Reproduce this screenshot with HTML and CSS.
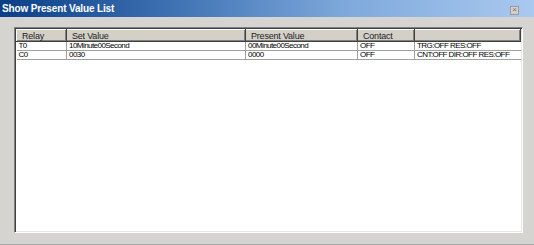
FILE: index.html
```html
<html>
  <head>
    <title>Show Present Value List</title>
    <link rel="stylesheet" href="styles.css">
  </head>
  <body>
    <div class="window">
      <div class="titlebar">
        <span class="title">Show Present Value List</span>
        <span class="close">&times;</span>
      </div>
      <div class="client">
        <div class="listbox">
          <table class="grid">
            <colgroup>
              <col class="c-relay">
              <col class="c-set">
              <col class="c-present">
              <col class="c-contact">
              <col class="c-extra">
            </colgroup>
            <thead>
              <tr>
                <th>Relay</th>
                <th>Set Value</th>
                <th>Present Value</th>
                <th>Contact</th>
                <th></th>
              </tr>
            </thead>
            <tbody>
              <tr>
                <td>T0</td>
                <td>10Minute00Second</td>
                <td>00Minute00Second</td>
                <td>OFF</td>
                <td>TRG:OFF RES:OFF</td>
              </tr>
              <tr>
                <td>C0</td>
                <td>0030</td>
                <td>0000</td>
                <td>OFF</td>
                <td>CNT:OFF DIR:OFF RES:OFF</td>
              </tr>
            </tbody>
          </table>
        </div>
      </div>
    </div>
  </body>
</html>
```

FILE: styles.css
```css
body {
  margin: 0;
  background: #d4d0c8;
  font-family: "Liberation Sans", Arial, sans-serif;
}

.window {
  width: 534px;
  height: 245px;
  display: flex;
  flex-direction: column;
  background: #d6d4d0;
  border-bottom: 1px solid #a8a8a8;
  box-sizing: border-box;
}

.titlebar {
  height: 17px;
  display: flex;
  align-items: center;
  justify-content: space-between;
  padding: 0 15px 0 2px;
  background: linear-gradient(to right, #0a3f86 0%, #3a6eb0 30%, #7fa9dc 65%, #a9c9ef 100%);
}

.title {
  color: white;
  font-weight: bold;
  font-size: 10px;
  letter-spacing: -0.15px;
}

.close {
  width: 7px;
  height: 7px;
  margin-top: 4px;
  font-size: 8px;
  line-height: 6px;
  text-align: center;
  color: #6c6c6c;
  background: #d4d0c8;
  border: 1px solid #9a9a9a;
}

.client {
  flex: 1;
  padding: 10px 13px 11px 14px;
  display: flex;
}

.listbox {
  flex: 1;
  background: white;
  border-top: 1px solid #808080;
  border-left: 1px solid #808080;
  border-right: 1px solid #ffffff;
  border-bottom: 1px solid #ffffff;
  box-shadow: inset 1px 1px 0 #404040, inset -1px -1px 0 #e8e8e8;
  padding: 1px 1px 0 1px;
}

.grid {
  border-collapse: collapse;
  table-layout: fixed;
  width: 504px;
  font-size: 8px;
  letter-spacing: -0.55px;
  color: #000;
}

.c-relay { width: 50px; }
.c-set { width: 179px; }
.c-present { width: 112px; }
.c-contact { width: 57px; }
.c-extra { width: 106px; }

.grid th {
  height: 12px;
  padding: 0 0 0 5px;
  font-weight: normal;
  font-size: 9px;
  letter-spacing: -0.2px;
  text-align: left;
  color: #222;
  background: #d4d0c8;
  border-top: 1px solid #ffffff;
  border-left: 1px solid #ffffff;
  border-right: 1px solid #404040;
  border-bottom: 1px solid #404040;
  box-shadow: inset -1px -1px 0 #808080;
}

.grid td {
  height: 8px;
  padding: 0 0 0 2px;
  line-height: 8px;
  white-space: nowrap;
  overflow: hidden;
  border-right: 1px solid #a0a0a0;
  border-bottom: 1px solid #a0a0a0;
}

.grid td:last-child {
  border-right: none;
}
```
